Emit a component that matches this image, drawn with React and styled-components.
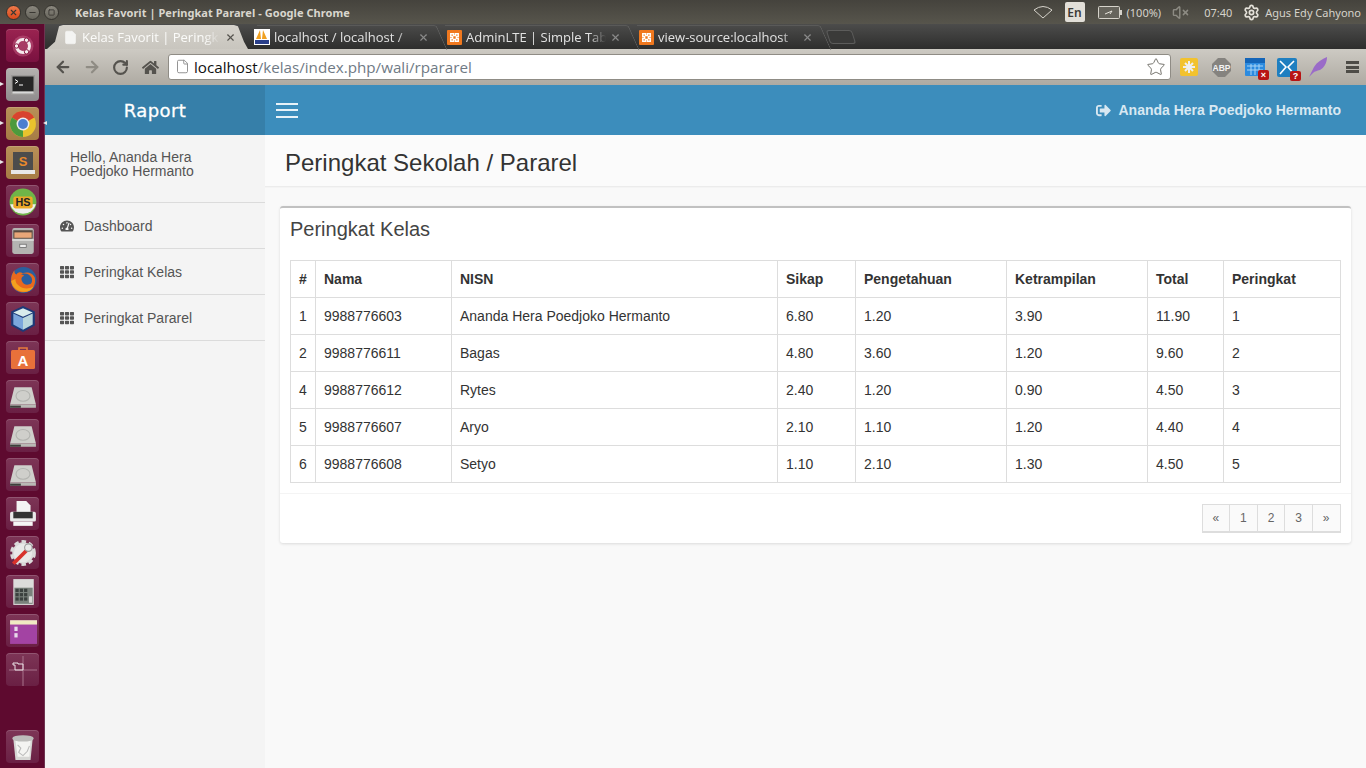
import React from "react";
import styled, { createGlobalStyle } from "styled-components";
import { ArrowLeft, ArrowRight, RotateCw, Star, File, X, Minus, Square, VolumeX, Settings } from "lucide-react";
import { FaHome, FaTh, FaTachometerAlt, FaSignOutAlt } from "react-icons/fa";

const Global = createGlobalStyle`
  html, body { margin: 0; padding: 0; height: 768px; overflow: hidden; background: #f9f9f9; }
  * { box-sizing: border-box; }
  #root { height: 768px; }
`;

const Desktop = styled.div`
  width: 1366px; height: 768px; display: flex; flex-direction: column; overflow: hidden;
  font-family: "Liberation Sans", Arial, sans-serif;
`;

/* ---------- Ubuntu top panel ---------- */
const Panel = styled.header`
  height: 24px; flex: none; display: flex; align-items: center; padding-left: 6px; padding-right: 5px;
  background: linear-gradient(#45433d, #57554c);
  color: #dcd9d1; font-family: "Noto Sans", sans-serif; font-size: 11px;
`;
const WindowButtons = styled.div`display: flex; gap: 4px; margin-right: 16px;`;
const WindowButton = styled.span`
  width: 15px; height: 15px; border-radius: 50%; display: flex; align-items: center; justify-content: center;
  background: ${p => p.$close ? "linear-gradient(#f07a4a,#d8491c)" : "linear-gradient(#8a877e,#66645b)"};
  border: 1px solid #35332e; color: #3a3833;
`;
const WindowTitle = styled.span`font-weight: 700; letter-spacing: .05px; color: #d9d6ce; white-space: nowrap;`;
const PanelTray = styled.div`margin-left: auto; display: flex; align-items: center; height: 24px;`;
const Lang = styled.span`
  width: 20px; height: 20px; margin: 0 13px 0 12px; background: #e2dfd8; color: #3c3b37; border-radius: 2px;
  font-size: 12px; font-weight: 600; display: flex; align-items: center; justify-content: center;
`;
const TrayText = styled.span`color: #d6d3cb; font-size: 11px; white-space: nowrap; margin-left: ${p => p.$ml || "0"};`;
const TrayIcon = styled.span`display: flex; margin-left: ${p => p.$ml || "0"};`;

/* ---------- Body ---------- */
const Workspace = styled.div`flex: 1; display: flex; min-height: 0;`;

const Launcher = styled.nav`
  width: 45px; flex: none; background: #5e0a2f; border-right: 1px solid #6e3350;
  display: flex; flex-direction: column; align-items: flex-start; gap: 6px; padding: 5px 0 5px 6px;
`;
const Tile = styled.div`
  position: relative; width: 33px; height: 33px; flex: none; border-radius: 4px;
  display: flex; align-items: center; justify-content: center;
  background: ${p => ({
    red: "linear-gradient(#9a2350,#7a1140)",
    grey: "linear-gradient(#b5b2b0,#8f8c8d)",
    gold: "linear-gradient(#b89058,#a67c45)",
  }[p.$tone] || "linear-gradient(#7d3556,#6a2044)")};
  box-shadow: inset 0 1px 0 rgba(255,255,255,.16);
  margin-top: ${p => p.$push ? "auto" : "0"};
`;
const Pip = styled.span`
  position: absolute; top: 14px; ${p => p.$right ? "left: 37px; border-right: 4px solid #e8e8e8;" : "left: -6px; border-left: 4px solid #e8e8e8;"}
  border-top: 2.5px solid transparent; border-bottom: 2.5px solid transparent;
`;

const Browser = styled.div`flex: 1; min-width: 0; display: flex; flex-direction: column;`;

const TabStrip = styled.div`
  height: 25px; flex: none; display: flex; align-items: flex-end; padding-left: 2px;
  background: linear-gradient(#4c4c4b, #2e2e2d);
`;
const Tab = styled.div`
  position: relative;
  height: 24px; width: ${p => p.$w}px; flex: none; display: flex; align-items: center;
  padding-left: ${p => p.$pl}px; padding-right: 12px; gap: 4px; margin-right: ${p => p.$mr || 0}px;
  font-family: "Open Sans", "Noto Sans", sans-serif; font-size: 13px;
  color: ${p => p.$active ? "#fbfbf9" : "#e2e2e2"};
  background: ${p => p.$active ? "linear-gradient(#d6d3cc,#c8c5be)" : "transparent"};
  clip-path: ${p => p.$active ? "polygon(0 100%, 4% 70%, 6% 5%, 8% 0, 93% 0, 95% 5%, 98% 70%, 100% 100%)" : "none"};
  ${p => !p.$active && `
    &::after {
      content: ""; position: absolute; right: -1px; top: 0; width: 10px; height: 24px;
      border-right: 1px solid #626261; border-top: 1px solid #5a5a59; border-top-right-radius: 3px;
      transform: skewX(24deg); pointer-events: none;
    }
    &::before {
      content: ""; position: absolute; left: 4px; right: 9px; top: 0; height: 1px; background: #5a5a59;
    }
  `}
`;
const TabTitle = styled.span`
  flex: 1; min-width: 0; overflow: hidden; white-space: nowrap;
  -webkit-mask-image: linear-gradient(to right, #000 88%, transparent);
  mask-image: linear-gradient(to right, #000 88%, transparent);
`;
const TabClose = styled.span`display: flex; color: ${p => p.$active ? "#55534e" : "#8a8a8a"};`;
const NewTab = styled.span`
  width: 26px; height: 14px; margin: 0 0 5px 3px; border: 1px solid #5c5c5b; border-radius: 3px;
  transform: skewX(18deg); background: #3a3a39;
`;

const Toolbar = styled.div`
  height: 36px; flex: none; display: flex; align-items: center; padding-left: 3px;
  background: linear-gradient(#cdcac3, #aeaaa2); color: #55534e;
`;
const NavButton = styled.span`
  width: ${p => p.$w || 29}px; flex: none; display: flex; justify-content: center; color: ${p => p.$off ? "#8f8c84" : "#55534e"};
`;
const Omnibox = styled.div`
  width: 1003px; height: 26px; flex: none; margin-left: 3px; display: flex; align-items: center; padding: 0 4px 1px 6px;
  background: #fff; border: 1px solid #8f8c85; border-radius: 3px; font-family: "Open Sans", "Noto Sans", sans-serif; font-size: 15.2px;
`;
const UrlHost = styled.span`color: #111; margin-left: 4px;`;
const UrlPath = styled.span`color: #6f7a85;`;
const Extensions = styled.div`flex: 1; display: flex; align-items: center; padding-left: 9px;`;
const Ext = styled.span`position: relative; display: flex; flex: none; margin-right: ${p => p.$mr}px;`;
const Badge = styled.span`
  position: absolute; right: -4px; bottom: -4px; width: 11px; height: 10px; background: #b81414; border-radius: 2px;
  color: #fff; font-size: 9px; line-height: 10px; text-align: center; font-weight: 700;
`;
const MenuGlyph = styled.span`
  width: 13px; height: 12px; flex: none; margin-left: 18px;
  border-top: 3px solid #4e4c47; border-bottom: 3px solid #4e4c47; position: relative;
  &::after { content: ""; position: absolute; left: 0; right: 0; top: 1.5px; height: 3px; background: #4e4c47; }
`;

/* ---------- AdminLTE page ---------- */
const Page = styled.div`flex: 1; min-height: 0; display: flex; background: #f9f9f9;`;
const Sidebar = styled.aside`width: 220px; flex: none; display: flex; flex-direction: column; background: #f4f4f4;`;
const Logo = styled.div`
  height: 50px; flex: none; background: #367fa9; color: #fff; display: flex; align-items: center; justify-content: center;
  font-family: "DejaVu Sans", sans-serif; font-size: 18px; letter-spacing: .4px; -webkit-text-stroke: .3px #fff;
`;
const UserPanel = styled.div`
  height: 68px; padding: 15px 40px 0 25px; font-size: 14px; line-height: 14px; color: #555; border-bottom: 1px solid #dbdbdb;
`;
const SideItem = styled.a`
  height: 46px; display: flex; align-items: center; gap: 10px; padding-left: 15px; color: #555; font-size: 14px;
  border-bottom: 1px solid #dbdbdb; svg { width: 14px; flex: none; }
`;

const Main = styled.main`flex: 1; min-width: 0; display: flex; flex-direction: column;`;
const Navbar = styled.div`
  height: 50px; flex: none; background: #3c8dbc; display: flex; align-items: center; padding: 0 25px 0 11px;
`;
const Burger = styled.span`
  width: 22px; height: 15px; border-top: 2px solid #e8f2f8; border-bottom: 2px solid #e8f2f8; position: relative;
  &::after { content: ""; position: absolute; left: 0; right: 0; top: 4.5px; height: 2px; background: #e8f2f8; }
`;
const NavUser = styled.span`
  margin-left: auto; display: flex; align-items: center; gap: 8px; color: #d8e8f2; font-weight: 700; font-size: 14px;
`;
const ContentHeader = styled.div`
  height: 52px; flex: none; display: flex; align-items: center; padding: 4px 0 0 20px; background: #fbfbfb;
  border-bottom: 1px solid #ececec; color: #333; font-size: 24px; box-shadow: 0 1px 1px rgba(0,0,0,.02);
`;
const Box = styled.section`
  margin: 19px 15px 0; background: #fff; border-top: 2px solid #c1c1c1; border-radius: 3px;
  box-shadow: 0 1px 3px rgba(0,0,0,.12);
`;
const BoxTitle = styled.h3`margin: 0; padding: 10px; height: 42px; font-size: 20px; line-height: 22px; font-weight: 400; color: #444;`;
const BoxBody = styled.div`padding: 10px;`;
const Table = styled.table`
  width: 1050px; table-layout: fixed; border-collapse: collapse; font-size: 14px; line-height: 20px; color: #333;
  tr { height: 37px; }
  th, td { border: 1px solid #ddd; padding: 0 8px; text-align: left; white-space: nowrap; }
  th { font-weight: 700; }
`;
const BoxFooter = styled.div`padding: 10px 10.5px 10px 10px; border-top: 1px solid #f4f4f4; display: flex; justify-content: flex-end;`;
const PageLink = styled.a`
  width: 28.6px; height: 29px; margin-left: -1px; display: flex; align-items: center; justify-content: center;
  background: #fafafa; border: 1px solid #ddd; border-bottom-width: 2px; color: #666; font-size: 12px;
  &:first-child { margin-left: 0; }
`;

/* ---------- Drawings ---------- */
const Svg = ({ children, s = 26 }) => <svg width={s} height={s} viewBox="0 0 26 26">{children}</svg>;

const UbuntuIcon = () => (
  <Svg>
    <circle cx="13" cy="13" r="10.5" fill="#c0577d" opacity=".55" />
    <circle cx="13" cy="13" r="6.5" fill="none" stroke="#f5e9ed" strokeWidth="3" />
    <circle cx="6.5" cy="13" r="2.2" fill="#f5e9ed" stroke="#8a1a45" />
    <circle cx="16.5" cy="7.2" r="2.2" fill="#f5e9ed" stroke="#8a1a45" />
    <circle cx="16.5" cy="18.8" r="2.2" fill="#f5e9ed" stroke="#8a1a45" />
  </Svg>
);
const TerminalIcon = () => (
  <Svg>
    <rect x="1" y="3" width="24" height="20" fill="#9c9a98" />
    <rect x="2.5" y="4.5" width="21" height="15" fill="#262626" />
    <path d="M2.5 19.5h21v2h-21z" fill="#d8d8d8" />
    <path d="M5 7.5l3 2-3 2" stroke="#fff" fill="none" strokeWidth="1" />
    <path d="M9 13h4" stroke="#fff" strokeWidth="1" />
  </Svg>
);
const ChromeIcon = () => (
  <Svg s={28}>
    <circle cx="13" cy="13" r="12" fill="#e9c22d" />
    <path d="M13 13L2.6 7A12 12 0 0 1 23.4 7z" fill="#d8432f" />
    <path d="M13 13L2.6 7A12 12 0 0 0 13 25z" fill="#4d9a3d" />
    <circle cx="13" cy="13" r="6" fill="#eee" />
    <circle cx="13" cy="13" r="4.6" fill="#4c7fd0" />
  </Svg>
);
const SublimeIcon = () => (
  <Svg>
    <path d="M3 2h20v19H3z" fill="#4c4c4c" />
    <path d="M1 20h24v4H1z" fill="#e8e8e8" />
    <text x="13" y="16" textAnchor="middle" fontSize="13" fontWeight="700" fontFamily="Liberation Sans" fill="#e98a2c">S</text>
  </Svg>
);
const HsIcon = () => (
  <Svg s={28}>
    <circle cx="13" cy="13" r="12.5" fill="#6fb548" />
    <path d="M1 15a12.5 12.5 0 0 0 24 0z" fill="#eee" />
    <rect x="4" y="8" width="18" height="11" rx="2" fill="#eba928" />
    <text x="13" y="17" textAnchor="middle" fontSize="10" fontWeight="700" fontFamily="Liberation Sans" fill="#222">HS</text>
  </Svg>
);
const CabinetIcon = () => (
  <Svg s={28}>
    <rect x="3" y="1" width="20" height="24" rx="2" fill="#b4b4b2" />
    <rect x="4" y="3" width="18" height="8" fill="#5a4a40" />
    <rect x="5" y="5" width="16" height="5" fill="#e9a678" />
    <rect x="3" y="11" width="20" height="2" fill="#d6d6d4" />
    <rect x="10" y="16" width="6" height="3" fill="#eee" stroke="#666" strokeWidth=".7" />
  </Svg>
);
const FirefoxIcon = () => (
  <Svg s={28}>
    <circle cx="13.5" cy="13" r="12" fill="#2a5f9e" />
    <path d="M13 7c3-2 9-1 11 4 1 5-1 11-7 13-5 1-11 0-14-6C1 13 2 8 5 4c0 2 0 3 2 4 1-2 3-3 6-1z" fill="#e8691e" />
    <path d="M11 8c3-2 8-1 10 3 1 3 0 6-2 6-3 1-6 0-7-3s0-4 2-5c-1-1-2-1-3-1z" fill="#2a5f9e" />
    <path d="M2 14c1 6 6 10 12 10 4 0 7-2 9-5-5 3-11 2-14-1-3-2-3-5-3-6z" fill="#f3a21e" />
  </Svg>
);
const CubeIcon = () => (
  <Svg s={28}>
    <path d="M13 1l11 5v13l-11 6-11-6V6z" fill="#1d3a78" />
    <path d="M13 3l9 4-9 4-9-4z" fill="#d8ecec" />
    <path d="M4 8l9 4v11l-9-5z" fill="#7ba6dc" />
    <path d="M22 8l-9 4v11l9-5z" fill="#b9d6dc" />
  </Svg>
);
const BagIcon = () => (
  <Svg>
    <path d="M9 5V3h8v2" fill="none" stroke="#e87b3c" strokeWidth="1.6" />
    <rect x="1" y="5" width="24" height="19" rx="1.5" fill="#e8713a" />
    <text x="13" y="21" textAnchor="middle" fontSize="15" fontWeight="700" fontFamily="Liberation Sans" fill="#fff">A</text>
  </Svg>
);
const DiskIcon = () => (
  <Svg s={28}>
    <path d="M5 4h16l4 16H1z" fill="#cfcfcb" />
    <ellipse cx="13" cy="12" rx="6.5" ry="5" fill="none" stroke="#b2b3af" />
    <path d="M1 20h24v3H1z" fill="#b9b9b5" />
    <path d="M1 21h10v2H1z" fill="#3f3f3c" />
  </Svg>
);
const PrinterIcon = () => (
  <Svg s={28}>
    <path d="M7 1h9l4 4v7H7z" fill="#f3f3f3" />
    <rect x="1" y="11" width="24" height="9" rx="1.5" fill="#e9e9e9" />
    <rect x="4" y="11" width="18" height="6" fill="#333" />
    <rect x="4" y="20" width="18" height="4" fill="#f6f6f6" />
  </Svg>
);
const SettingsIcon = () => (
  <Svg s={28}>
    <circle cx="13" cy="13" r="10" fill="#dadada" stroke="#dadada" strokeWidth="4" strokeDasharray="4 2.5" />
    <circle cx="13" cy="13" r="8.5" fill="#e9e9e9" />
    <path d="M4 23L20 7" stroke="#d8322c" strokeWidth="3.5" />
    <circle cx="18" cy="8" r="3.5" fill="#e9e9e9" stroke="#999" />
  </Svg>
);
const CalcIcon = () => (
  <Svg s={28}>
    <rect x="4" y="1" width="19" height="24" fill="#dcdcda" />
    <rect x="5" y="9" width="17" height="15" fill="#7a827c" />
    <g fill="#3b413e">
      {[6, 10, 14].map(x => [10, 14, 18].map(y => <rect key={x + "" + y} x={x} y={y} width="3" height="3" />))}
    </g>
    <rect x="18.5" y="17" width="3" height="6" fill="#d9d9d7" />
  </Svg>
);
const WorkbenchIcon = () => (
  <Svg s={28}>
    <rect x="1" y="3" width="25" height="22" fill="#a343a3" />
    <rect x="1" y="3" width="25" height="4" fill="#f0e9c2" />
    <rect x="5" y="9" width="3" height="4" fill="#e8d9ea" />
    <rect x="5" y="15" width="3" height="4" fill="#e8d9ea" />
  </Svg>
);
const WallIcon = () => (
  <svg width="33" height="33" viewBox="0 0 33 33">
    <path d="M3 17h28M17 3v30" stroke="#a8728b" strokeWidth="1" />
    <path d="M7 10h5v1h5v6H9v-5H7z" fill="none" stroke="#ece4e8" strokeWidth="1" />
  </svg>
);
const TrashIcon = () => (
  <Svg s={28}>
    <path d="M4 5h18l-2 20H6z" fill="#d6d6d4" />
    <path d="M6 7h14l-1 15H8z" fill="#f4f4f2" />
    <ellipse cx="13" cy="5" rx="10" ry="3" fill="#bdbdbb" />
    <path d="M8 11l3 3-2 4 4 3 4-4 2-5" stroke="#bbb" fill="none" />
  </Svg>
);

const Favicon = ({ kind }) => kind === "pma" ? (
  <svg width="16" height="16" viewBox="0 0 16 16" style={{ flex: "none" }}>
    <rect width="16" height="16" fill="#fff" />
    <path d="M2 10L6 1l1 9zM8 10l1-9 4 9z" fill="#f0a020" />
    <rect x="1" y="11" width="14" height="4" fill="#2a3f8a" />
  </svg>
) : (
  <svg width="15" height="15" viewBox="0 0 16 16" style={{ flex: "none" }}>
    <rect width="16" height="16" rx="1" fill="#f0781e" />
    <path d="M4 4h3v2h2V4h3v3h-2v2h2v3H9v-2H7v2H4V9h2V7H4z" fill="none" stroke="#fff" strokeWidth="1.5" />
  </svg>
);

const rows = [
  ["1", "9988776603", "Ananda Hera Poedjoko Hermanto", "6.80", "1.20", "3.90", "11.90", "1"],
  ["2", "9988776611", "Bagas", "4.80", "3.60", "1.20", "9.60", "2"],
  ["4", "9988776612", "Rytes", "2.40", "1.20", "0.90", "4.50", "3"],
  ["5", "9988776607", "Aryo", "2.10", "1.10", "1.20", "4.40", "4"],
  ["6", "9988776608", "Setyo", "1.10", "2.10", "1.30", "4.50", "5"],
];
const heads = ["#", "Nama", "NISN", "Sikap", "Pengetahuan", "Ketrampilan", "Total", "Peringkat"];
const cols = [25, 136, 326, 78, 151, 141, 76, 117];

export default function App() {
  return (
    <Desktop>
      <Global />
      <Panel>
        <WindowButtons>
          <WindowButton $close><X size={9} strokeWidth={3} /></WindowButton>
          <WindowButton><Minus size={9} strokeWidth={3} /></WindowButton>
          <WindowButton><Square size={7} strokeWidth={3} /></WindowButton>
        </WindowButtons>
        <WindowTitle>Kelas Favorit | Peringkat Pararel - Google Chrome</WindowTitle>
        <PanelTray>
          <TrayIcon>
            <svg width="20" height="14" viewBox="0 0 20 14"><path d="M1 5q9-7 18 0l-9 8z" fill="none" stroke="#d6d3cb" strokeWidth="1" /></svg>
          </TrayIcon>
          <Lang>En</Lang>
          <TrayIcon>
            <svg width="24" height="13" viewBox="0 0 24 13"><rect x=".5" y=".5" width="21" height="12" rx="1" fill="#66645c" stroke="#d6d3cb" /><rect x="22" y="4" width="2" height="5" fill="#d6d3cb" /><path d="M7 8l7-3-2 3" stroke="#e8e5dd" fill="none" /></svg>
          </TrayIcon>
          <TrayText $ml="5px">(100%)</TrayText>
          <TrayIcon $ml="11px"><VolumeX size={17} color="#8d8b83" /></TrayIcon>
          <TrayText $ml="15px">07:40</TrayText>
          <TrayIcon $ml="11px"><Settings size={17} color="#e4e1d9" strokeWidth={2.4} /></TrayIcon>
          <TrayText $ml="5px">Agus Edy Cahyono</TrayText>
        </PanelTray>
      </Panel>
      <Workspace>
        <Launcher>
          <Tile $tone="red"><UbuntuIcon /></Tile>
          <Tile $tone="grey"><Pip /><TerminalIcon /></Tile>
          <Tile $tone="gold"><Pip /><Pip $right /><ChromeIcon /></Tile>
          <Tile $tone="gold"><Pip /><SublimeIcon /></Tile>
          <Tile><HsIcon /></Tile>
          <Tile><CabinetIcon /></Tile>
          <Tile><FirefoxIcon /></Tile>
          <Tile><CubeIcon /></Tile>
          <Tile><BagIcon /></Tile>
          <Tile><DiskIcon /></Tile>
          <Tile><DiskIcon /></Tile>
          <Tile><DiskIcon /></Tile>
          <Tile><PrinterIcon /></Tile>
          <Tile><SettingsIcon /></Tile>
          <Tile><CalcIcon /></Tile>
          <Tile><WorkbenchIcon /></Tile>
          <Tile><WallIcon /></Tile>
          <Tile $push><TrashIcon /></Tile>
        </Launcher>
        <Browser>
          <TabStrip>
            <Tab $active $w={201} $pl={16} $mr={5}>
              <File size={15} color="#f4f4f2" fill="#f4f4f2" strokeWidth={1} style={{ flex: "none" }} />
              <TabTitle>Kelas Favorit | Peringk</TabTitle>
              <TabClose $active><X size={11} strokeWidth={2.5} /></TabClose>
            </Tab>
            <Tab $w={188} $pl={1}>
              <Favicon kind="pma" />
              <TabTitle>localhost / localhost /</TabTitle>
              <TabClose><X size={11} strokeWidth={2.5} /></TabClose>
            </Tab>
            <Tab $w={192} $pl={6}>
              <Favicon />
              <TabTitle>AdminLTE | Simple Tab</TabTitle>
              <TabClose><X size={11} strokeWidth={2.5} /></TabClose>
            </Tab>
            <Tab $w={192} $pl={6}>
              <Favicon />
              <TabTitle>view-source:localhost</TabTitle>
              <TabClose><X size={11} strokeWidth={2.5} /></TabClose>
            </Tab>
            <NewTab />
          </TabStrip>
          <Toolbar>
            <NavButton><ArrowLeft size={18} strokeWidth={3} /></NavButton>
            <NavButton $off><ArrowRight size={18} strokeWidth={3} /></NavButton>
            <NavButton><RotateCw size={17} strokeWidth={3} /></NavButton>
            <NavButton $w={30}><FaHome size={17} /></NavButton>
            <Omnibox>
              <File size={15} color="#8d8d8d" strokeWidth={1.5} />
              <UrlHost>localhost</UrlHost><UrlPath>/kelas/index.php/wali/rpararel</UrlPath>
              <Star size={20} color="#77756f" strokeWidth={1.2} style={{ marginLeft: "auto" }} />
            </Omnibox>
            <Extensions>
              <Ext $mr={14}>
                <svg width="18" height="18" viewBox="0 0 18 18"><rect width="18" height="18" rx="2" fill="#f2c22e" /><path d="M9 3v12M3 9h12M5 5l8 8M13 5l-8 8" stroke="#eee" strokeWidth="2" /></svg>
              </Ext>
              <Ext $mr={14}>
                <svg width="19" height="19" viewBox="0 0 19 19"><path d="M6 0h7l6 6v7l-6 6H6l-6-6V6z" fill="#85837f" /><text x="9.5" y="13" textAnchor="middle" fontSize="8.5" fontWeight="700" fontFamily="Liberation Sans" fill="#f2f2f2">ABP</text></svg>
              </Ext>
              <Ext $mr={12}>
                <svg width="20" height="18" viewBox="0 0 20 18"><rect width="20" height="18" rx="1" fill="#2c8be0" /><rect y="0" width="20" height="5" fill="#1465b8" /><path d="M2 8h16M2 12h16M6 6v11M10 6v11M14 6v11" stroke="#a8d4f5" /></svg>
                <Badge>×</Badge>
              </Ext>
              <Ext $mr={12}>
                <svg width="20" height="19" viewBox="0 0 20 19"><rect width="20" height="19" rx="2" fill="#1f7fc0" /><path d="M3 3l6 6-6 7M17 3l-6 6 6 7" fill="none" stroke="#fff" strokeWidth="1.6" /></svg>
                <Badge>?</Badge>
              </Ext>
              <Ext $mr={0}>
                <svg width="19" height="20" viewBox="0 0 19 20"><path d="M0 20L5 10C8 5 13 2 18 0c0 6-3 11-7 13-3 1-5 1-7 3z" fill="#9a6bc8" /></svg>
              </Ext>
              <MenuGlyph />
            </Extensions>
          </Toolbar>
          <Page>
            <Sidebar>
              <Logo>Raport</Logo>
              <UserPanel>Hello, Ananda Hera Poedjoko Hermanto</UserPanel>
              <SideItem><FaTachometerAlt />Dashboard</SideItem>
              <SideItem><FaTh />Peringkat Kelas</SideItem>
              <SideItem><FaTh />Peringkat Pararel</SideItem>
            </Sidebar>
            <Main>
              <Navbar>
                <Burger />
                <NavUser><FaSignOutAlt size={15} />Ananda Hera Poedjoko Hermanto</NavUser>
              </Navbar>
              <ContentHeader>Peringkat Sekolah / Pararel</ContentHeader>
              <Box>
                <BoxTitle>Peringkat Kelas</BoxTitle>
                <BoxBody>
                  <Table>
                    <colgroup>{cols.map((w, i) => <col key={i} style={{ width: w }} />)}</colgroup>
                    <thead><tr>{heads.map(h => <th key={h}>{h}</th>)}</tr></thead>
                    <tbody>
                      {rows.map(r => <tr key={r[1]}>{r.map((c, i) => <td key={i}>{c}</td>)}</tr>)}
                    </tbody>
                  </Table>
                </BoxBody>
                <BoxFooter>
                  {["«", "1", "2", "3", "»"].map(p => <PageLink key={p}>{p}</PageLink>)}
                </BoxFooter>
              </Box>
            </Main>
          </Page>
        </Browser>
      </Workspace>
    </Desktop>
  );
}
